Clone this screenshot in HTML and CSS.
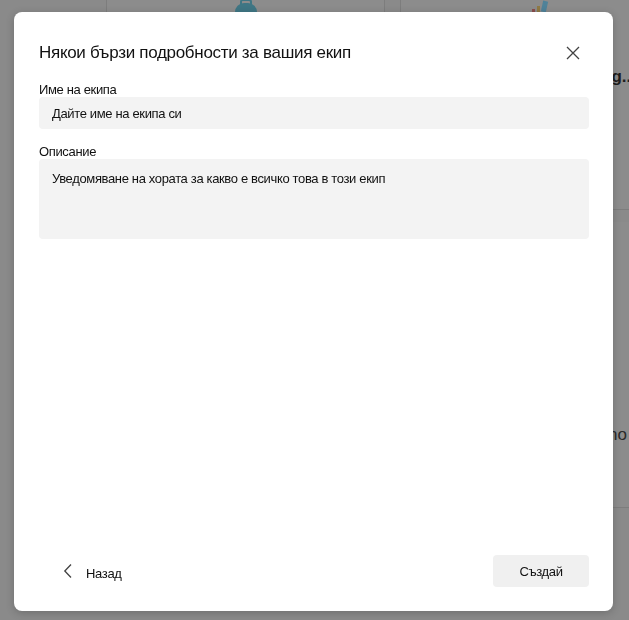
FILE: index.html
```html
<!DOCTYPE html>
<html lang="bg">
<head>
  <meta charset="UTF-8" />
  <meta name="viewport" content="width=device-width, initial-scale=1.0"/>
  <title>Създаване на екип</title>
  <link rel="stylesheet" href="styles.css">
</head>
<body>
  <!-- page behind the dialog -->
  <div class="page">
    <div class="card">
      <div class="card-art"><span class="kettle"></span></div>
    </div>
    <div class="card">
      <div class="card-art"><span class="bars"><i class="b1"></i><i class="b2"></i><i class="b3"></i></span></div>
      <div class="card-title">Planning...</div>
    </div>
    <div class="card"></div>
    <div class="card"></div>
    <div class="card">
      <div class="card-text">Echo</div>
    </div>
    <div class="card"></div>
  </div>

  <div class="overlay">
    <div class="dialog">
      <div class="dialog-head">
        <h2>Някои бързи подробности за вашия екип</h2>
        <button class="close" aria-label="Затвори">
          <svg width="14" height="14" viewBox="0 0 14 14"><path d="M1 1L13 13M13 1L1 13" stroke="#424242" stroke-width="1.3" fill="none"/></svg>
        </button>
      </div>

      <label class="field-label" for="teamName">Име на екипа</label>
      <input class="field" id="teamName" type="text" placeholder="Дайте име на екипа си" />

      <label class="field-label desc-label" for="teamDesc">Описание</label>
      <textarea class="field area" id="teamDesc" placeholder="Уведомяване на хората за какво е всичко това в този екип"></textarea>

      <div class="dialog-foot">
        <button class="back">
          <svg width="10" height="16" viewBox="0 0 10 16"><path d="M8 1.5L1.8 8L8 14.5" stroke="#424242" stroke-width="1.3" fill="none"/></svg>
          <span>Назад</span>
        </button>
        <button class="create">Създай</button>
      </div>
    </div>
  </div>
</body>
</html>
```

FILE: styles.css
```css
body {
  margin: 0;
  font-family: 'Liberation Sans', Arial, sans-serif;
  background: #8a8a8a;
  color: #111;
}

.page {
  height: 620px;
  overflow: hidden;
  display: grid;
  grid-template-columns: 279px 279px 279px;
  grid-template-rows: 210px 286px 200px;
  gap: 12px 15px;
  padding-left: 106px;
}

.card {
  background: #8c8c8c;
  border: 1px solid #7d7d7d;
  border-top: none;
  border-radius: 0 0 4px 4px;
}

.card-art {
  height: 12px;
  display: flex;
  justify-content: center;
  align-items: flex-end;
}

.kettle {
  width: 22px;
  height: 9px;
  background: #3f7684;
  border-radius: 10px 10px 0 0;
  position: relative;
}

.kettle::before {
  content: '';
  position: absolute;
  left: 5px;
  top: -4px;
  width: 8px;
  height: 4px;
  border: 2px solid #3f7684;
  border-bottom: none;
  border-radius: 3px 3px 0 0;
}

.bars {
  display: flex;
  align-items: flex-end;
  gap: 2px;
}

.bars i {
  display: block;
  width: 3px;
}

.b1 { height: 3px; background: #8a4d4d; }
.b2 { height: 6px; background: #8f7a45; }
.b3 { height: 11px; width: 5px !important; background: #4f8299; transform: rotate(12deg); }

.card-title {
  margin-top: 55px;
  padding-right: 42px;
  text-align: right;
  font-size: 17px;
  font-weight: 700;
  color: #1e1e1e;
  white-space: nowrap;
}

.card-text {
  margin-top: 203px;
  padding-right: 51px;
  text-align: right;
  font-size: 17px;
  color: #2a2a2a;
  white-space: nowrap;
}

/* dialog */
.overlay {
  position: fixed;
  inset: 0;
  display: flex;
  align-items: flex-start;
  padding: 12px 0 0 14px;
}

.dialog {
  width: 599px;
  height: 599px;
  box-sizing: border-box;
  background: #fff;
  border-radius: 8px;
  box-shadow: 0 2px 8px rgba(0, 0, 0, 0.2);
  padding: 24px 24px 24px 25px;
  display: flex;
  flex-direction: column;
}

.dialog-head {
  height: 34px;
  display: flex;
  align-items: center;
  justify-content: space-between;
}

.dialog-head h2 {
  margin: 0;
  font-size: 17px;
  font-weight: 400;
  letter-spacing: -0.3px;
  color: #111;
}

.close {
  width: 32px;
  height: 32px;
  border: none;
  background: none;
  display: flex;
  align-items: center;
  justify-content: center;
  cursor: pointer;
}

.field-label {
  margin-top: 12px;
  line-height: 15px;
  font-size: 13px;
  letter-spacing: -0.35px;
  color: #111;
}

.desc-label {
  margin-top: 15px;
}

.field {
  border: none;
  outline: none;
  background: #f3f3f3;
  border-radius: 4px;
  font-family: inherit;
  font-size: 13px;
  letter-spacing: -0.35px;
  color: #111;
  padding: 0 13px;
  height: 32px;
  box-sizing: border-box;
}

.field::placeholder {
  color: #111;
  opacity: 1;
}

.area {
  height: 80px;
  resize: none;
  padding-top: 11px;
  line-height: 18px;
}

.dialog-foot {
  margin-top: auto;
  display: flex;
  justify-content: space-between;
  align-items: center;
}

.back {
  display: flex;
  align-items: center;
  gap: 13px;
  margin-left: 24px;
  padding: 0;
  border: none;
  background: none;
  font-family: inherit;
  font-size: 13px;
  letter-spacing: -0.35px;
  color: #111;
  cursor: pointer;
}

.back span {
  margin-top: 5px;
}

.create {
  width: 96px;
  height: 32px;
  border: none;
  border-radius: 4px;
  background: #f0f0f0;
  font-family: inherit;
  font-size: 13px;
  letter-spacing: -0.35px;
  color: #111;
  cursor: pointer;
}
```
